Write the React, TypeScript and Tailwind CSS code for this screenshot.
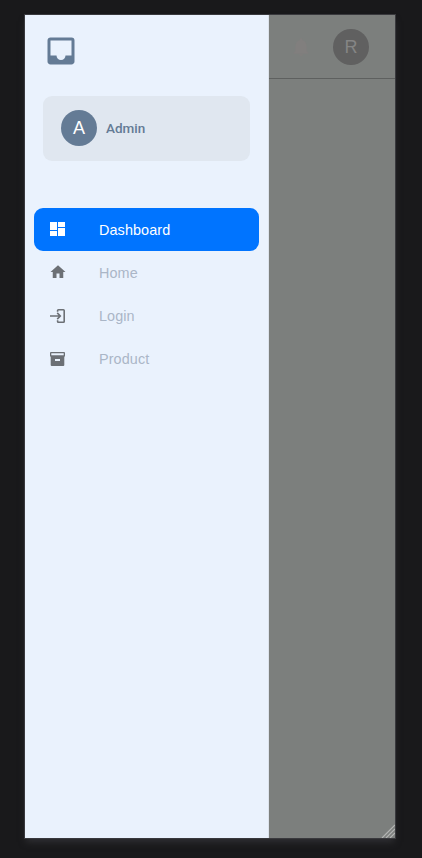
import React from 'react';
import { MdHome, MdInbox, MdNotifications } from 'react-icons/md';

function DashboardIcon() {
  return (
    <svg width="15" height="14" viewBox="0 0 15 14" fill="currentColor" shapeRendering="crispEdges">
      <path d="M0 0h7v8H0zM0 9h7v5H0zM8 0h7v5H8zM8 6h7v8H8z" />
    </svg>
  );
}

function HomeIcon() {
  return <MdHome size={18} className="-mx-[2px] -mt-px shrink-0" />;
}

function LoginIcon() {
  return (
    <svg className="mt-px shrink-0" width="15" height="14" viewBox="0 0 15 14" fill="none" stroke="currentColor" strokeWidth="1.6">
      <path d="M7.6 2.7V1.6q0-.8.8-.8h5q.8 0 .8.8v10.8q0 .8-.8.8h-5q-.8 0-.8-.8v-1.1" />
      <path d="M0 7h10.3M7.2 3.9 10.3 7l-3.1 3.1" />
    </svg>
  );
}

function ArchiveIcon() {
  return (
    <svg className="mt-px shrink-0" width="15" height="14" viewBox="0 0 15 14" fill="currentColor" fillRule="evenodd">
      <path d="M1 0h13q1 0 1 1v3.5h-.7V13q0 1-1 1H1.7q-1 0-1-1V4.5H0V1q0-1 1-1ZM1.3 1.2v2h12.4v-2ZM5 7v2h5V7Z" />
    </svg>
  );
}

const items = [
  { label: 'Dashboard', icon: DashboardIcon, active: true },
  { label: 'Home', icon: HomeIcon, active: false },
  { label: 'Login', icon: LoginIcon, active: false },
  { label: 'Product', icon: ArchiveIcon, active: false },
];

function Sidebar() {
  return (
    <aside className="flex w-[244px] shrink-0 flex-col border-r border-[#dce3ec] bg-[#eaf2fd]">
      <div className="pl-[18px] pt-[18px] text-[#647b95]">
        <MdInbox size={36} />
      </div>
      <div className="ml-[18px] mt-[27px] flex h-[65px] w-[207px] items-center rounded-[9px] bg-[#e0e7f0] pb-px pl-[18px]">
        <div className="flex size-9 items-center justify-center rounded-full bg-[#647b95] pt-px text-[18px] text-white">A</div>
        <span className="ml-[9px] pt-px font-[Roboto] text-[13.5px] font-medium text-[#647b95]">Admin</span>
      </div>
      <nav className="ml-[9px] mt-[47px] w-[225px]">
        {items.map(({ label, icon: Icon, active }) => (
          <div key={label} className={`flex h-[43px] items-center rounded-[9px] pl-4 ${active ? 'bg-[#0074ff] text-white' : 'text-[#aab6c7]'}`}>
            <span className={`flex h-4 w-[15px] items-center justify-center pb-px ${active ? 'text-white' : 'text-[#6c7075]'}`}>
              <Icon />
            </span>
            <span className="ml-[34px] pt-px text-[14.4px] leading-5 tracking-[0.1px]">{label}</span>
          </div>
        ))}
      </nav>
    </aside>
  );
}

export default function App() {
  return (
    <div className="h-[858px] w-[422px] bg-[#19191b] pl-6 pt-[14px] font-['Liberation_Sans',sans-serif]">
      <div className="flex h-[825px] w-[372px] border border-[#39393d] bg-[#7c7f7d] shadow-[0_5px_7px_-2px_#303034]">
        <Sidebar />
        <main className="relative flex-1">
          <header className="flex h-16 items-center border-b border-[#5e605f] pl-[21px]">
            <MdNotifications size={22} className="text-[#817f7e]" />
            <div className="ml-[21px] flex size-9 items-center justify-center rounded-full bg-[#606060] pt-px text-[18px] text-[#858585]">R</div>
          </header>
          <svg className="absolute bottom-0 right-0" width="14" height="14" viewBox="0 0 14 14" stroke="#b4b5b4" strokeWidth="1.2">
            <path d="M1 14 14 1M5 14l9-9M9 14l5-5" />
          </svg>
        </main>
      </div>
    </div>
  );
}
